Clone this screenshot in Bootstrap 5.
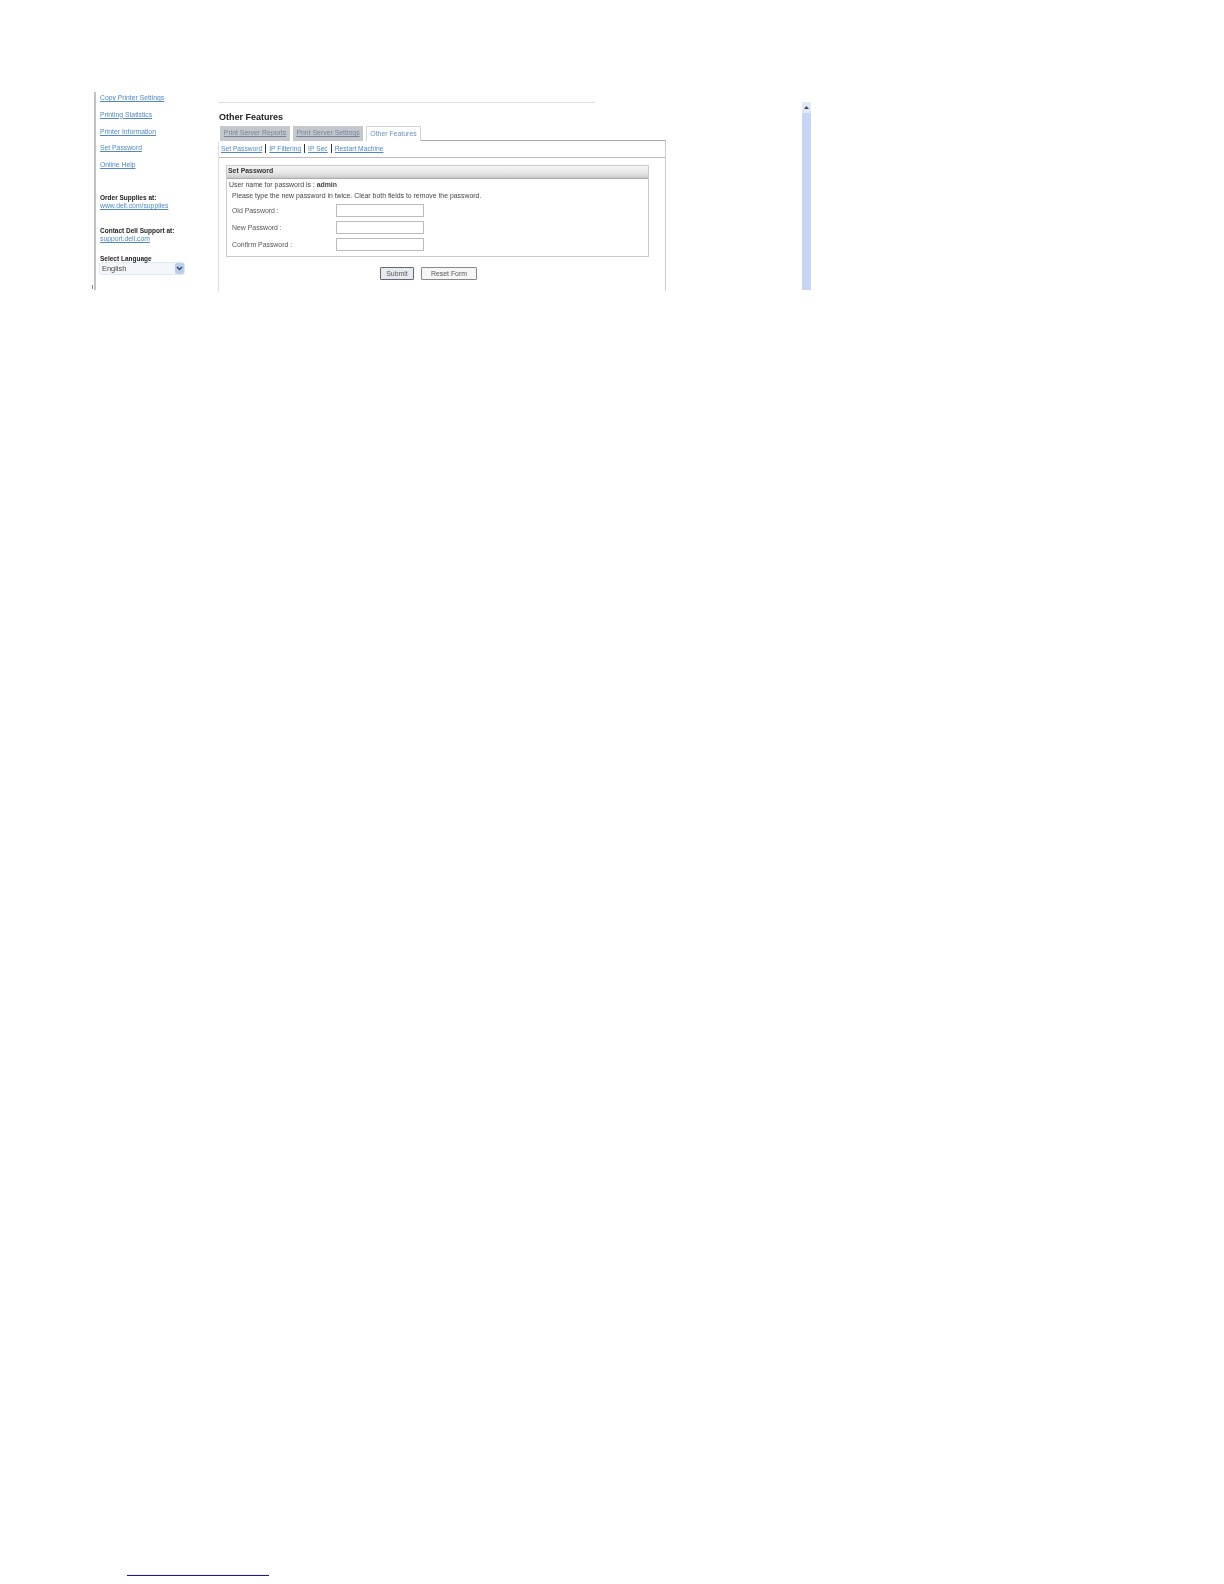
<!DOCTYPE html>
<html lang="en">
<head>
<meta charset="utf-8">
<title>Other Features</title>
<link href="https://cdn.jsdelivr.net/npm/bootstrap@5.3.0/dist/css/bootstrap.min.css" rel="stylesheet">
<style>
html,body{background:#fff}
body{height:1584px;overflow:hidden;font-family:"Liberation Sans",Arial,sans-serif;font-size:6.9px;line-height:9px;color:#444;padding:92px 0 0 94px}
.shot{width:717px;height:199px;filter:blur(.6px);overflow:visible}
.side{width:124px;border-left:2px solid #c2c2c2;padding:1px 0 0 4px;height:198px;position:relative}
.tick{position:absolute;left:-4px;top:193px;width:1px;height:4px;background:#888}
a.lnk{color:#4f88c4;text-decoration:underline;display:block;font-size:6.8px;line-height:9px}
.side-links a.lnk{height:16.75px}
.side-links{height:101px}
.side h6{font-size:6.5px;line-height:8px;font-weight:700;color:#222;margin:0}
.group a.lnk{line-height:8px}
.grp1{height:33px}
.grp2{height:28px}
.side h6.lang{margin-bottom:-1px}
.fake-sel{width:86px;height:13px;margin-left:-1px;border-radius:3px;background:#f3f6fa;border:1px solid #e2e8f0;font-size:7.4px;line-height:11px;padding-left:2px;color:#444}
.fake-arrow{width:9px;height:11px;background:#bccde9;border-radius:2px;display:flex;align-items:center;justify-content:center}
.main-col{width:448px;padding-top:10px}
.toprule{width:377px;height:1px;background:#ddd}
.page-title{font-size:9px;line-height:11px;font-weight:700;color:#222;margin:9px 0 3px 1px}
.tabrow{height:15px;padding-left:2px;gap:3px}
.tabbed{height:15px;background:#c4c8cd;color:#6f8399;font-size:6.9px;line-height:13px;text-align:center;text-decoration:underline}
.t1{width:70px}.t2{width:70px}
.t3{width:55px;background:#fff;color:#6a90bd;text-decoration:none;border:1px solid #d4d4d4;border-bottom:0}
.tabline{height:15px;border-bottom:1px solid #aaa;margin-left:-3px}
.panel{border-left:1px solid #ddd;border-right:1px solid #ccc;height:150px;width:448px}
.subnav{height:17px;border-bottom:1px solid #bbb;padding:3px 0 0 2px;font-size:6.7px}
.subnav a{color:#4f88c4;text-decoration:underline}
.subnav i{display:inline-block;width:1px;height:9px;background:#333;margin:0 3px;vertical-align:-2px}
.box{margin:7px 0 0 7px;width:423px;height:92px;border:1px solid #ccc}
.boxhead{height:13px;background:linear-gradient(#f5f5f5,#e6e6e6 60%,#c9c9c9);border-bottom:1px solid #aaa;font-weight:700;color:#333;font-size:6.9px;line-height:10px;padding-left:1px}
.info{padding:1px 0 0 2px;height:10px}
.info2{padding:2px 0 0 5px;height:12px;margin-bottom:1px}
.frow{height:17px;padding-left:5px;color:#555;align-items:center}
.frow span{width:104px}
.frow b{display:block;width:88px;height:13px;border:1px solid #bbb;background:#fff;font-weight:400}
.actions{padding:10px 0 0 161px;gap:7px}
.fake-btn{height:13px;border:1px solid #888;background:#f6f6f6;font-size:6.9px;line-height:11px;text-align:center;color:#555;border-radius:1px}
.fb1{width:34px;background:#e6eaee;border-color:#667}
.fb2{width:56px}
.scroll{width:9px;height:188px;margin-top:10px;background:#c8d5f5}
.scroll-top{height:11px;background:#e2e8f5;display:flex;align-items:center;justify-content:center}
.foot-line{margin:1284px 0 0 33px;width:142px;height:1px;background:#1c1c8c;box-shadow:0 -1px 0 #eef0fb}
</style>
</head>
<body>
<div class="shot d-flex">
  <div class="side">
    <span class="tick"></span>
    <div class="side-links">
      <a class="lnk" href="#">Copy Printer Settings</a>
      <a class="lnk" href="#">Printing Statistics</a>
      <a class="lnk" href="#">Printer Information</a>
      <a class="lnk" href="#">Set Password</a>
      <a class="lnk" href="#">Online Help</a>
    </div>
    <div class="group grp1"><h6>Order Supplies at:</h6><a class="lnk" href="#">www.dell.com/supplies</a></div>
    <div class="group grp2"><h6>Contact Dell Support at:</h6><a class="lnk" href="#">support.dell.com</a></div>
    <h6 class="lang">Select Language</h6>
    <div class="fake-sel d-flex justify-content-between align-items-center">English<span class="fake-arrow"><svg width="7" height="5" viewBox="0 0 7 5"><path d="M1 1l2.5 2.5L6 1" fill="none" stroke="#33466b" stroke-width="1.4"/></svg></span></div>
  </div>
  <div class="main-col">
    <div class="toprule"></div>
    <div class="page-title">Other Features</div>
    <div class="tabrow d-flex">
      <div class="tabbed t1">Print Server Reports</div>
      <div class="tabbed t2">Print Server Settings</div>
      <div class="tabbed t3">Other Features</div>
      <div class="tabline flex-grow-1"></div>
    </div>
    <div class="panel">
      <div class="subnav"><a href="#">Set Password</a><i></i><a href="#">IP Filtering</a><i></i><a href="#">IP Sec</a><i></i><a href="#">Restart Machine</a></div>
      <div class="box">
        <div class="boxhead">Set Password</div>
        <div class="info">User name for password is : <b>admin</b></div>
        <div class="info2">Please type the new password in twice. Clear both fields to remove the password.</div>
        <div class="frow d-flex"><span>Old Password :</span><b></b></div>
        <div class="frow d-flex"><span>New Password :</span><b></b></div>
        <div class="frow d-flex"><span>Confirm Password :</span><b></b></div>
      </div>
      <div class="actions d-flex">
        <div class="fake-btn fb1">Submit</div>
        <div class="fake-btn fb2">Reset Form</div>
      </div>
    </div>
  </div>
  <div class="flex-grow-1"></div>
  <div class="scroll"><div class="scroll-top"><svg width="7" height="5" viewBox="0 0 7 5"><path d="M1 4l2.5-3L6 4z" fill="#445"/></svg></div></div>
</div>
<div class="foot-line"></div>
<script src="https://cdn.jsdelivr.net/npm/bootstrap@5.3.0/dist/js/bootstrap.bundle.min.js"></script>
</body>
</html>
